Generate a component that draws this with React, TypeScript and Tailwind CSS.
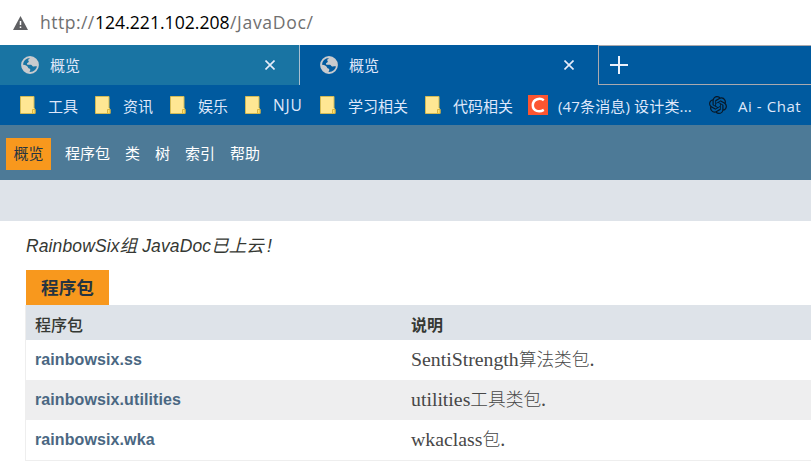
import type { ReactNode } from "react";
import { SiOpenai } from "react-icons/si";

const ui = "font-['Open_Sans','Noto_Sans_CJK_SC',sans-serif]";
const sans = "font-['Liberation_Sans','Noto_Sans_CJK_SC',sans-serif]";

function Folder() {
  return (
    <svg width="16" height="18" viewBox="0 0 16 18" className="shrink-0">
      <path d="M.5.5h13.500v11.500l1 1v4.500H.5z" fill="#ffe793" stroke="#d3bb55" />
      <path d="M12.500 17.500v-4h2.500v4z" fill="#ffe06c" stroke="#d9b43f" strokeWidth="1" />
    </svg>
  );
}

function Globe() {
  return (
    <svg width="18" height="18" viewBox="0 0 18 18" className="shrink-0">
      <circle cx="9" cy="9" r="8" fill="none" stroke="#c9cbce" strokeWidth="1.800" />
      <path
        d="M10.500 1.200C9 2 7.500 2.600 7.200 4c-.1 1 .8.900.6 1.800-.3 1-1.500.8-1.800 1.700-.2.900.3 1.300 1.200 1.300h2.700c1 0 1.100 1.500 2.100 1.700 1.300.3 2.500-.3 4.500-.1 1.200-4.500-1.500-8.300-6-9.200zM1.200 8.500c1.800.2 3.800.6 5 1.800 1 1 .9 1.900 2 2.300 1 .4 1.300 1 1 2-.2.800-.8 1.200-.9 2.300-4-.2-7.300-3.600-7.100-8.400z"
        fill="#c9cbce"
      />
    </svg>
  );
}

function Close() {
  return (
    <svg width="10" height="10" viewBox="0 0 10 10" className="shrink-0">
      <path d="M.5.5l9 9M9.500.5l-9 9" stroke="#e6ecfa" strokeWidth="1.600" />
    </svg>
  );
}

function Tab({ className }: { className: string }) {
  return (
    <div className={`flex h-10 shrink-0 items-center pl-[21px] text-[#e1e8fa] ${className}`}>
      <Globe />
      <span className="ml-[11px] w-[215px] text-[15px]">概览</span>
      <Close />
    </div>
  );
}

function Bookmark({ width, children }: { width: string; children: ReactNode }) {
  return (
    <div className={`flex shrink-0 items-center ${width}`}>
      <Folder />
      <span className="ml-3 pt-0.5">{children}</span>
    </div>
  );
}

function Row({ name, latin, cjk, shade }: { name: string; latin: string; cjk: string; shade?: boolean }) {
  return (
    <div className={`flex h-10 items-center ${shade ? "bg-[#eeeeef]" : "bg-white"}`}>
      <span className={`w-[385px] shrink-0 pl-[9px] text-base font-bold tracking-[0.1px] text-[#4a6782] ${sans}`}>{name}</span>
      <span className="font-['Liberation_Serif','Noto_Sans_CJK_SC',serif] leading-6 text-[#474747]">
        <span className="text-[19.800px]">{latin}</span>
        <span className="text-[17.700px] font-light">{cjk}</span>
        <span className="text-[20px]">.</span>
      </span>
    </div>
  );
}

export default function App() {
  return (
    <div className={`h-[462px] w-[811px] overflow-hidden bg-white whitespace-nowrap ${ui}`}>
      <header>
        <div className="flex h-[45px] items-center pl-[13px] text-[17.600px] text-[#707070]">
          <svg width="15" height="14" viewBox="0 0 15 14" className="shrink-0">
            <path d="M7.500 0L15 14H0z" fill="#5f6063" />
            <path d="M7.500 5v4M7.500 10.500v1.500" stroke="white" strokeWidth="1.500" />
          </svg>
          <span className="ml-3 w-[55px] tracking-[0.45px]">http://</span>
          <span className="w-[135px] text-black">124.221.102.208</span>
          <span className="tracking-[0.65px]">/JavaDoc/</span>
        </div>
        <div className="flex h-10 bg-[#005a9f]">
          <Tab className="w-[300px] border-r border-[#a9bfd0] bg-[#1974a3]" />
          <Tab className="w-[298px] !pl-[20px]" />
          <div className="flex flex-1 items-center border-y border-l border-[#aaa9ae] pl-[11px]">
            <svg width="18" height="18" viewBox="0 0 18 18">
              <path d="M9 0v18M0 9h18" stroke="#edf1fb" strokeWidth="2" />
            </svg>
          </div>
        </div>
        <div className="flex h-10 items-center bg-[#005a9f] pl-5 text-[15px] text-[#dfe7fa]">
          <Bookmark width="w-[75px]">工具</Bookmark>
          <Bookmark width="w-[75px]">资讯</Bookmark>
          <Bookmark width="w-[75px]">娱乐</Bookmark>
          <Bookmark width="w-[75px]"><span className="text-[15.500px] tracking-[0.8px]">NJU</span></Bookmark>
          <Bookmark width="w-[105px]">学习相关</Bookmark>
          <Bookmark width="w-[103px]">代码相关</Bookmark>
          <svg width="20" height="20" viewBox="0 0 20 20" className="shrink-0">
            <path d="M0 0h20v20H0z" fill="#fc5531" />
            <path d="M15.800 5.200C12.500 2.800 5 3.200 4.800 10.300c0 6.200 6.700 7.100 11 4.600" fill="none" stroke="white" strokeWidth="2.500" />
          </svg>
          <span className="ml-[10px] w-[151px] shrink-0 pt-0.5 tracking-[0.15px]">(47条消息) 设计类...</span>
          <SiOpenai size={18} color="#071827" className="shrink-0" />
          <span className="ml-[11px] pt-0.5 tracking-[0.55px]">Ai - Chat</span>
        </div>
      </header>
      <nav className={`flex h-[55px] items-center bg-[#4d7a97] pl-1.5 pt-[3px] text-[15px] text-white ${sans}`}>
        <span className="mr-3.5 flex h-8 w-[45px] items-center justify-center bg-[#f8981d] pt-px text-[#253441]">概览</span>
        <div className="flex gap-[15px] pt-px">
          <span>程序包</span>
          <span>类</span>
          <span>树</span>
          <span>索引</span>
          <span>帮助</span>
        </div>
      </nav>
      <div className="h-[41px] bg-[#dee3e9]" />
      <main className={`pl-[25px] ${sans}`}>
        <div className="flex h-[49px] items-center pl-px pt-0.5 text-[17.500px] tracking-[0.12px] text-[#353833] italic">
          RainbowSix组 JavaDoc已上云<span className="pl-[3px]">!</span>
        </div>
        <div className="ml-px flex h-[35px] w-[83px] items-center justify-center bg-[#f8981d] pt-0.5 text-[17.600px] font-bold text-[#253441]">
          程序包
        </div>
        <div className="border-b border-l border-[#eee]">
          <div className="flex h-[35px] items-center bg-[#dee3e9] pt-[7px] text-base font-medium text-[#353833]">
            <span className="w-[385px] pl-[9px]">程序包</span>
            <span className="font-bold">说明</span>
          </div>
          <Row name="rainbowsix.ss" latin="SentiStrength" cjk="算法类包" />
          <Row name="rainbowsix.utilities" latin="utilities" cjk="工具类包" shade />
          <Row name="rainbowsix.wka" latin="wkaclass" cjk="包" />
        </div>
      </main>
    </div>
  );
}
